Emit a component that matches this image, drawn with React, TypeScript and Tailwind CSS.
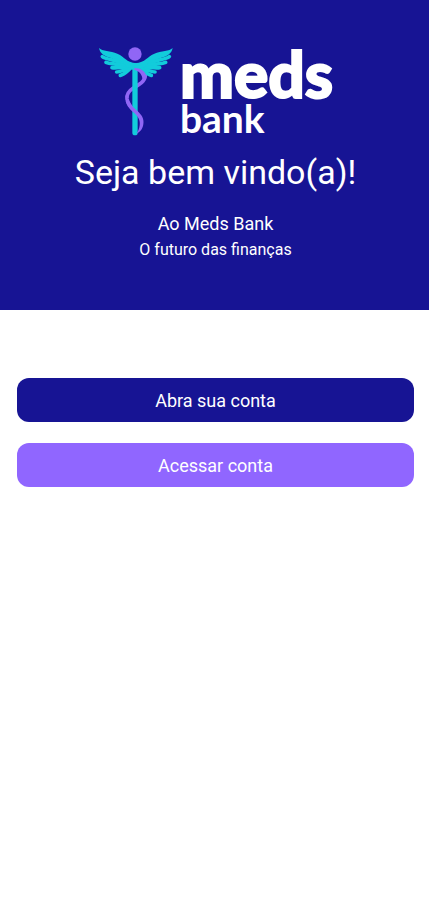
const actions = [
  { label: "Abra sua conta", className: "bg-[#171494]" },
  { label: "Acessar conta", className: "bg-[#9066ff]" },
];

function Wing() {
  return (
    <g fill="none" stroke="#12ccdb" strokeLinecap="round">
      <path
        fill="#12ccdb"
        stroke="none"
        d="M27 24 C36 34 62 33 82 41 C106 51 106 66 140 70 V88 C118 92 104 84 90 68 C76 50 34 58 27 24 Z"
      />
      <path strokeWidth="11" d="M37 50 C50 60 72 57 96 70" />
      <path strokeWidth="11" d="M48 67 C62 74 80 69 102 78" />
      <path strokeWidth="11" d="M66 83 C78 85 92 81 106 84" />
      <path strokeWidth="11" d="M80 96 C92 96 100 90 112 88" />
      <path strokeWidth="11" d="M91 106 C102 104 108 97 118 88" />
    </g>
  );
}

function Caduceus() {
  return (
    <svg viewBox="24 18 228 270" className="h-[90px] w-[76px] shrink-0" aria-hidden="true">
      <path
        d="M146 84 C164 93 170 107 162 119 C156 131 142 136 130 144 C116 153 109 162 111 177 C114 195 126 205 138 216"
        fill="none"
        stroke="#9066f5"
        strokeWidth="11"
        strokeLinecap="round"
      />
      <rect x="127" y="84" width="16" height="202" rx="8" fill="#12ccdb" />
      {/* Front pass of the snake over the staff, tapering to the tail */}
      <path
        d="M107 184 C111 200 121 209 133 219 C146 231 151 242 149 256 C148 266 144 275 139 281 C150 277 158 267 160 253 C163 236 154 224 143 214 C130 202 120 194 116 180 Z"
        fill="#9066f5"
      />
      <Wing />
      <g transform="translate(275 0) scale(-1 1)">
        <Wing />
      </g>
      <path d="M133 84 C152 84 168 94 169 112 L158 120 C157 104 149 94 133 89 Z" fill="#9066f5" />
      <circle cx="135" cy="42" r="20" fill="#9066f5" />
    </svg>
  );
}

function Logo() {
  return (
    <div className="flex justify-center gap-1.5">
      <Caduceus />
      <div className="flex flex-col items-start font-['Lato',sans-serif]">
        <span className="text-[64px] leading-[56px] font-black [-webkit-text-stroke:2px_white]">
          meds
        </span>
        <span className="text-[39px] leading-8 font-bold">bank</span>
      </div>
    </div>
  );
}

export default function App() {
  return (
    <div className="min-h-screen bg-white font-['Roboto',sans-serif] text-white">
      <header className="bg-[#171494] pt-[46px] pr-[15px] pb-12 pl-[17px] text-center">
        <Logo />
        <h1 className="mt-4 text-[34px] leading-10">Seja bem vindo(a)!</h1>
        <p className="mt-[18px] text-[18px] leading-7">Ao Meds Bank</p>
        <p className="text-base leading-6">O futuro das finanças</p>
      </header>

      <main className="flex flex-col gap-[21px] pt-[68px] pr-[15px] pl-[17px]">
        {actions.map((action) => (
          <button
            key={action.label}
            type="button"
            className={`h-11 w-full rounded-xl text-[18px] ${action.className}`}
          >
            {action.label}
          </button>
        ))}
      </main>
    </div>
  );
}
